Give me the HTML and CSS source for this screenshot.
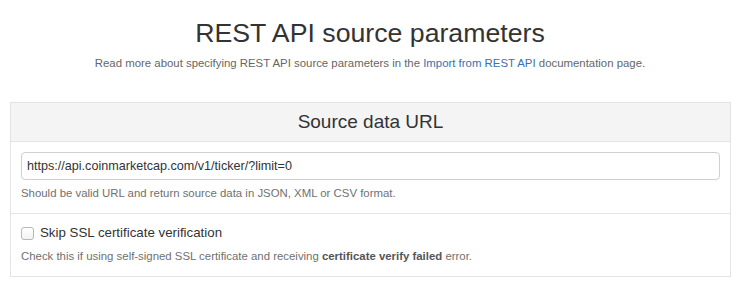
FILE: index.html
```html
<!DOCTYPE html>
<html lang="en">

<head>
    <meta charset="UTF-8">
    <meta name="viewport" content="width=device-width, initial-scale=1.0">
    <title>REST API source parameters</title>
    <link rel="stylesheet" href="styles.css">
</head>

<body>
    <div class="intro">
        <h1>REST API source parameters</h1>
        <p>Read more about specifying REST API source parameters in the <a href="#">Import from REST API</a> documentation page.</p>
    </div>

    <div class="panel">
        <div class="panel-head">Source data URL</div>
        <div class="panel-row">
            <input type="text" class="url" value="https://api.coinmarketcap.com/v1/ticker/?limit=0">
            <p class="hint">Should be valid URL and return source data in JSON, XML or CSV format.</p>
        </div>
        <div class="panel-row">
            <label class="check">
                <input type="checkbox">
                <span>Skip SSL certificate verification</span>
            </label>
            <p class="hint hint-check">Check this if using self-signed SSL certificate and receiving <b>certificate verify failed</b> error.</p>
        </div>
    </div>
</body>

</html>
```

FILE: styles.css
```css
* {
    box-sizing: border-box;
    padding: 0;
    margin: 0;
}

body {
    font-family: "Liberation Sans", Arial, sans-serif;
    color: #333;
    background-color: #fff;
}

.intro {
    text-align: center;
}

.intro h1 {
    font-size: 26.7px;
    font-weight: normal;
    line-height: 30px;
    margin-top: 18px;
    color: #333;
}

.intro p {
    font-size: 11.4px;
    line-height: 16px;
    margin-top: 7px;
    color: #666;
}

.intro a {
    color: #3a6fb0;
    text-decoration: none;
}

.panel {
    margin: 31px 9px 0 10px;
    border: 1px solid #e3e3e3;
}

.panel-head {
    background-color: #f4f4f4;
    border-bottom: 1px solid #e3e3e3;
    padding: 8px 10px;
    font-size: 19px;
    line-height: 22px;
    text-align: center;
    color: #333;
}

.panel-row {
    padding: 10px 10px 12px;
}

.panel-row + .panel-row {
    border-top: 1px solid #e6e6e6;
}

.url {
    display: block;
    width: 100%;
    height: 28px;
    padding: 0 5px;
    border: 1px solid #cfcfcf;
    border-radius: 4px;
    font-family: inherit;
    font-size: 12.6px;
    color: #333;
    outline: none;
}

.hint {
    font-size: 11.4px;
    line-height: 16px;
    margin-top: 5px;
    color: #707070;
}

.hint b {
    color: #555;
}

.check {
    display: flex;
    align-items: center;
    gap: 6px;
    font-size: 13.3px;
    line-height: 18px;
    color: #333;
    cursor: pointer;
}

.check input {
    appearance: none;
    -webkit-appearance: none;
    width: 13px;
    height: 13px;
    border: 1px solid #b8b8b8;
    border-radius: 3px;
    background: linear-gradient(#fff, #f3f3f3);
    cursor: pointer;
}

.hint-check {
    margin-top: 6px;
}
```
